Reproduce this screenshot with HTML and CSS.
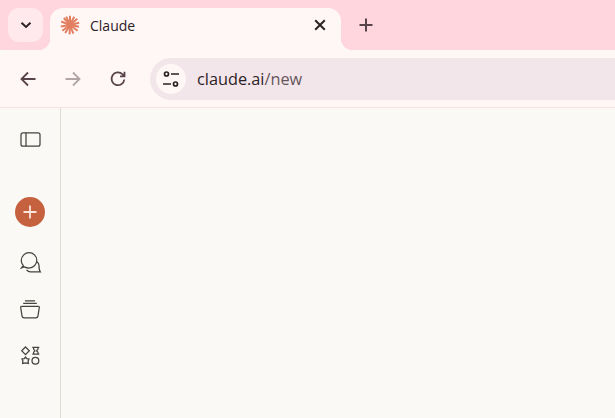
FILE: index.html
```html
<!doctype html>
<html lang="en">

    <head>
        <meta charset="UTF-8" />
        <title>Claude</title>
        <link rel="stylesheet" href="styles.css">
    </head>

    <body>
        <div class="tabstrip">
            <div class="tab_search">
                <svg width="16" height="16" viewBox="0 0 16 16"><path class="ico_dark" stroke-width="2" d="M3.5 5.8 8 10l4.500-4.200" /></svg>
            </div>
            <div class="tab">
                <svg class="tab_logo" width="20" height="20" viewBox="0 0 20 20">
                    <g class="spokes">
                        <path d="M10 10V0.800" />
                        <path d="M10 10 14.200 1.800" />
                        <path d="M10 10 17.300 3.700" />
                        <path d="M10 10 19.200 7.800" />
                        <path d="M10 10 19 11.800" />
                        <path d="M10 10 17.600 15.800" />
                        <path d="M10 10 13.300 18.600" />
                        <path d="M10 10 9.600 19.400" />
                        <path d="M10 10 5.200 18" />
                        <path d="M10 10 2.300 15.700" />
                        <path d="M10 10 0.800 11.500" />
                        <path d="M10 10 1.200 6.500" />
                        <path d="M10 10 3.800 3" />
                        <path d="M10 10 6.200 1.600" />
                    </g>
                </svg>
                <span class="tab_title">Claude</span>
                <svg class="tab_close" width="16" height="16" viewBox="0 0 16 16"><path class="ico_dark" stroke-width="2" d="M3.200 3.200 12.800 12.800M12.800 3.200 3.200 12.800" /></svg>
            </div>
            <div class="new_tab">
                <svg width="16" height="16" viewBox="0 0 16 16"><path class="ico_brown" stroke-width="2" d="M8 1.500V14.500M1.500 8H14.500" /></svg>
            </div>
        </div>

        <div class="toolbar">
            <div class="nav_btn">
                <svg width="18" height="18" viewBox="0 0 18 18"><path class="ico_brown" stroke-width="1.800" d="M16.500 9H2.500M9 2.500 2.500 9 9 15.500" /></svg>
            </div>
            <div class="nav_btn nav_off">
                <svg width="18" height="18" viewBox="0 0 18 18"><path class="ico_brown" stroke-width="1.800" d="M1.500 9H15.500M9 2.500 15.500 9 9 15.500" /></svg>
            </div>
            <div class="nav_btn">
                <svg width="18" height="18" viewBox="0 0 18 18"><path class="ico_brown" stroke-width="1.800" d="M15.300 9.500A6.400 6.400 0 1 1 13.400 4.200L15.500 6.300M15.500 1.800V6.300H11" /></svg>
            </div>
            <div class="omnibox">
                <div class="site_chip">
                    <svg width="18" height="18" viewBox="0 0 18 18">
                        <circle class="ico_dark thin" cx="4.500" cy="4" r="2" />
                        <path class="ico_dark thin" d="M9 4H17M1 14H9" />
                        <circle class="ico_dark thin" cx="13.500" cy="14" r="2" />
                    </svg>
                </div>
                <div class="url">claude.ai<span class="url_path">/new</span></div>
            </div>
        </div>

        <div class="page">
            <div class="sidebar">
                <svg class="side_ico" width="24" height="24" viewBox="0 0 24 24">
                    <rect class="ico_side" x="3" y="5.800" width="19" height="13.400" rx="2" />
                    <path class="ico_side" d="M8 5.800V19.200" />
                </svg>
                <div class="add_btn">
                    <svg width="16" height="16" viewBox="0 0 16 16"><path class="ico_add" d="M8 1.500V14.500M1.500 8H14.500" /></svg>
                </div>
                <svg class="side_ico" width="24" height="24" viewBox="0 0 24 24">
                    <path class="ico_side" d="M3.500 17.800 5.200 15.500C3.800 13.800 3.200 12 3.300 10.300 3.500 6 7 2.700 11 2.700 15.300 2.700 18.800 6 18.800 10.300 18.800 14.600 15.300 18 11 18 8.800 18 7.200 17.300 6 16.800Z" />
                    <path class="ico_side" d="M19 11.800C20.300 12.800 21 14 21 15.500 21 18 21.200 20.500 22.300 21.800H12.500C10.800 21.800 9.500 21 8.600 19.800" />
                </svg>
                <svg class="side_ico" width="24" height="24" viewBox="0 0 24 24">
                    <path class="ico_side" d="M7 3.800H17M5.200 6.300H18.800" />
                    <path class="ico_side" d="M3.800 9.300H20.200C21 9.300 21.400 9.800 21.300 10.500L20 18.800C19.800 20.200 19 20.800 17.800 20.800H6.200C5 20.800 4.200 20.200 4 18.800L2.700 10.500C2.600 9.800 3 9.300 3.800 9.300Z" />
                </svg>
                <svg class="side_ico" width="24" height="24" viewBox="0 0 24 24">
                    <path class="ico_side" d="M7.500 3 11.300 6.800 7.500 10.600 3.700 6.800Z" />
                    <path class="ico_side" d="M14.300 3.400H21.300M14.300 10.200H21.300M15.600 3.400V5C15.600 6 17 6 17 6.800S15.600 7.600 15.600 8.600V10.200M20 3.400V5C20 6 18.600 6 18.600 6.800S20 7.600 20 8.600V10.200" />
                    <path class="ico_side" d="M7.500 13 8.800 14.600 11 15 10.100 16.900 10.400 19.400 7.500 18.800 4.600 19.400 4.900 16.900 4 15 6.200 14.600Z" />
                    <circle class="ico_side" cx="17.400" cy="16.700" r="3.400" />
                </svg>
            </div>
            <div class="main"></div>
        </div>
    </body>

</html>
```

FILE: styles.css
```css
* {
    padding: 0px;
    margin: 0px;
    box-sizing: border-box;
}

html,
body {
    width: 100%;
    height: 100%;
    overflow: hidden;
}

body {
    display: flex;
    flex-direction: column;
    font-family: "Open Sans", "Liberation Sans", sans-serif;
    background: #faf9f5;
}

svg {
    display: block;
    fill: none;
}

.ico_dark {
    fill: none;
    stroke: #2c2226;
}

.ico_dark.thin {
    stroke-width: 1.7;
}

.ico_brown {
    stroke: #59434a;
}

.ico_side {
    fill: none;
    stroke: #45433e;
    stroke-width: 1.25;
}

.ico_add {
    stroke: #fbe4da;
    stroke-width: 1.8;
}

/* tab row */
.tabstrip {
    height: 50px;
    flex-shrink: 0;
    display: flex;
    align-items: flex-start;
    padding: 8px 0px 0px 8px;
    background: #ffd5de;
}

.tab_search {
    width: 35px;
    height: 34px;
    display: flex;
    align-items: center;
    justify-content: center;
    background: #ffe9ec;
    border-radius: 11px;
}

.tab {
    position: relative;
    width: 291px;
    height: 42px;
    margin-left: 7px;
    padding: 0px 13px 8px 10px;
    display: flex;
    align-items: center;
    background: #fff7f5;
    border-radius: 13px 13px 0px 0px;
}

/* inverse corners at the foot of the tab */
.tab::before,
.tab::after {
    content: "";
    position: absolute;
    bottom: 0px;
    width: 12px;
    height: 12px;
}

.tab::before {
    left: -12px;
    background: radial-gradient(circle at 0px 0px, transparent 12px, #fff7f5 12.500px);
}

.tab::after {
    right: -12px;
    background: radial-gradient(circle at 12px 0px, transparent 12px, #fff7f5 12.500px);
}

.spokes path {
    stroke: #e27f60;
    stroke-width: 2;
}

.tab_title {
    margin-left: 10px;
    font-size: 14px;
    color: #2c2226;
}

.tab_close {
    margin-left: auto;
}

.new_tab {
    margin: 9px 0px 0px 17px;
}

/* address row */
.toolbar {
    height: 58px;
    flex-shrink: 0;
    display: flex;
    align-items: center;
    gap: 27px;
    padding: 1px 0px 0px 19px;
    background: #fff7f5;
    border-radius: 12px 0px 0px 0px;
    border-bottom: 1px solid #f8e2e1;
}

.nav_off {
    opacity: 0.45;
}

.omnibox {
    flex: 1;
    height: 42px;
    margin-left: -4px;
    margin-right: -30px;
    padding-left: 6px;
    display: flex;
    align-items: center;
    background: #f2e6ea;
    border-radius: 21px;
}

.site_chip {
    width: 30px;
    height: 30px;
    display: flex;
    align-items: center;
    justify-content: center;
    background: #fff7f5;
    border-radius: 50%;
}

.url {
    margin-left: 11px;
    font-size: 16.300px;
    color: #2c2226;
}

.url_path {
    color: #66565c;
}

/* claude page */
.page {
    flex: 1;
    display: flex;
}

.sidebar {
    width: 61px;
    display: flex;
    flex-direction: column;
    align-items: center;
    padding: 19px 0px 0px 0px;
    border-right: 1px solid #dfddd6;
}

.side_ico {
    margin-bottom: 23px;
}

.add_btn {
    width: 30px;
    height: 30px;
    margin: 23px 0px 23px 0px;
    display: flex;
    align-items: center;
    justify-content: center;
    background: #c6613f;
    border-radius: 50%;
}

.main {
    flex: 1;
}
```
